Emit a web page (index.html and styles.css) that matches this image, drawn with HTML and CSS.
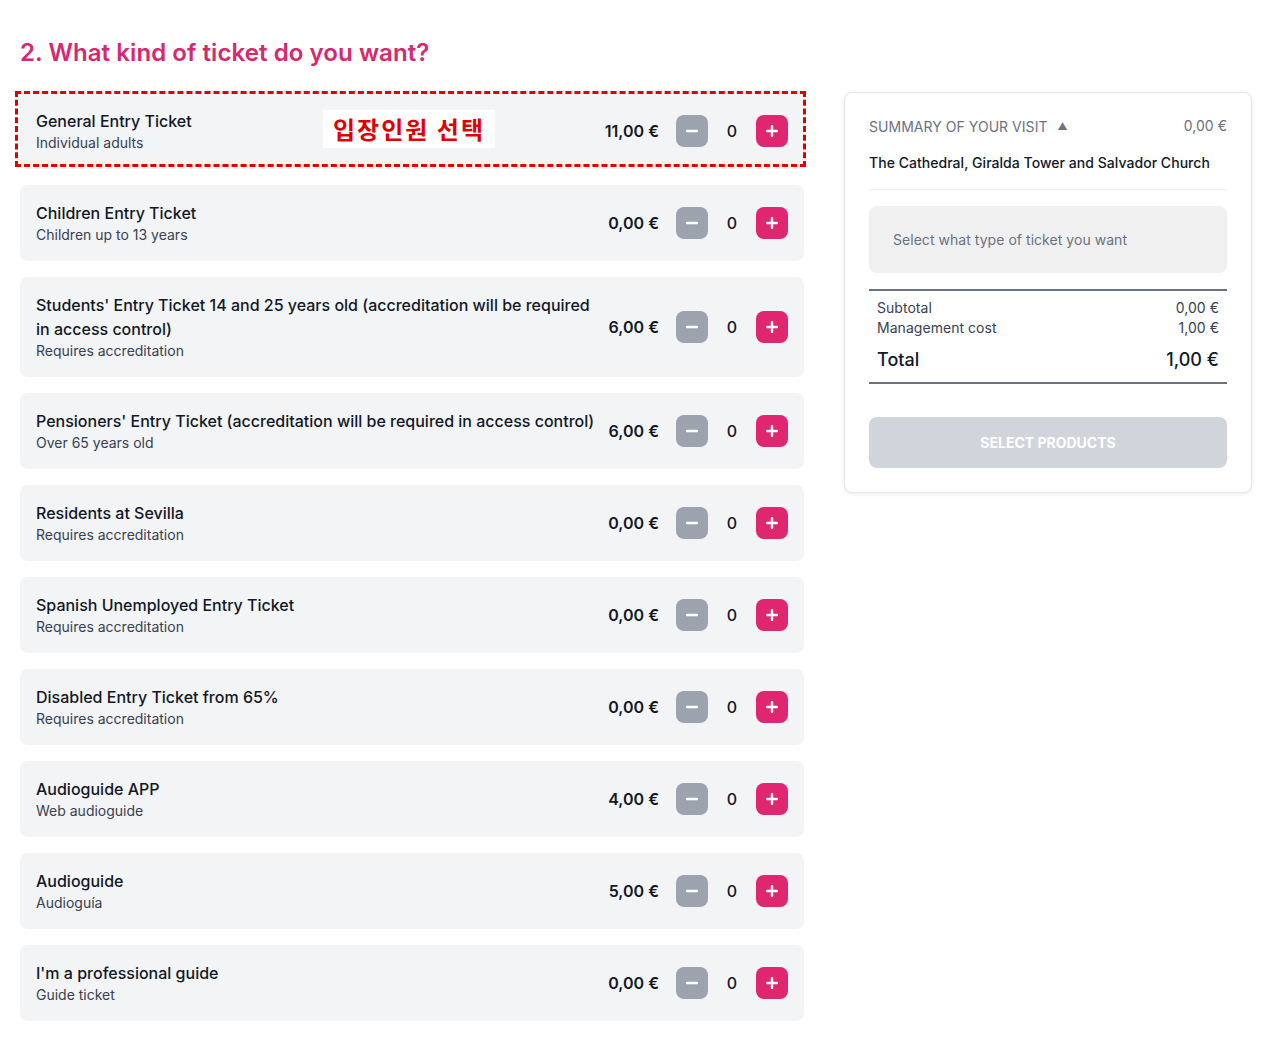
FILE: index.html
```html
<!DOCTYPE html>
<html lang="en">
<head>
<meta charset="utf-8">
<title>Tickets</title>
<link rel="stylesheet" href="styles.css">
</head>
<body>
<div class="page">
  <main class="left">
    <h2 class="heading">2. What kind of ticket do you want?</h2>
    <div class="list">
      <div class="row annotated">
        <div class="info"><div class="name">General Entry Ticket</div><div class="sub">Individual adults</div></div>
        <div class="ctrl"><span class="price">11,00 €</span><button class="btn minus"><svg viewBox="0 0 12 12"><path d="M1 6h10"/></svg></button><span class="count">0</span><button class="btn plus"><svg viewBox="0 0 12 12"><path d="M1 6h10M6 1v10"/></svg></button></div>
        <div class="dash"></div>
        <div class="note">입장인원 선택</div>
      </div>
      <div class="row">
        <div class="info"><div class="name">Children Entry Ticket</div><div class="sub">Children up to 13 years</div></div>
        <div class="ctrl"><span class="price">0,00 €</span><button class="btn minus"><svg viewBox="0 0 12 12"><path d="M1 6h10"/></svg></button><span class="count">0</span><button class="btn plus"><svg viewBox="0 0 12 12"><path d="M1 6h10M6 1v10"/></svg></button></div>
      </div>
      <div class="row">
        <div class="info"><div class="name">Students' Entry Ticket 14 and 25 years old (accreditation will be required in access control)</div><div class="sub">Requires accreditation</div></div>
        <div class="ctrl"><span class="price">6,00 €</span><button class="btn minus"><svg viewBox="0 0 12 12"><path d="M1 6h10"/></svg></button><span class="count">0</span><button class="btn plus"><svg viewBox="0 0 12 12"><path d="M1 6h10M6 1v10"/></svg></button></div>
      </div>
      <div class="row">
        <div class="info"><div class="name">Pensioners' Entry Ticket (accreditation will be required in access control)</div><div class="sub">Over 65 years old</div></div>
        <div class="ctrl"><span class="price">6,00 €</span><button class="btn minus"><svg viewBox="0 0 12 12"><path d="M1 6h10"/></svg></button><span class="count">0</span><button class="btn plus"><svg viewBox="0 0 12 12"><path d="M1 6h10M6 1v10"/></svg></button></div>
      </div>
      <div class="row">
        <div class="info"><div class="name">Residents at Sevilla</div><div class="sub">Requires accreditation</div></div>
        <div class="ctrl"><span class="price">0,00 €</span><button class="btn minus"><svg viewBox="0 0 12 12"><path d="M1 6h10"/></svg></button><span class="count">0</span><button class="btn plus"><svg viewBox="0 0 12 12"><path d="M1 6h10M6 1v10"/></svg></button></div>
      </div>
      <div class="row">
        <div class="info"><div class="name">Spanish Unemployed Entry Ticket</div><div class="sub">Requires accreditation</div></div>
        <div class="ctrl"><span class="price">0,00 €</span><button class="btn minus"><svg viewBox="0 0 12 12"><path d="M1 6h10"/></svg></button><span class="count">0</span><button class="btn plus"><svg viewBox="0 0 12 12"><path d="M1 6h10M6 1v10"/></svg></button></div>
      </div>
      <div class="row">
        <div class="info"><div class="name">Disabled Entry Ticket from 65%</div><div class="sub">Requires accreditation</div></div>
        <div class="ctrl"><span class="price">0,00 €</span><button class="btn minus"><svg viewBox="0 0 12 12"><path d="M1 6h10"/></svg></button><span class="count">0</span><button class="btn plus"><svg viewBox="0 0 12 12"><path d="M1 6h10M6 1v10"/></svg></button></div>
      </div>
      <div class="row">
        <div class="info"><div class="name">Audioguide APP</div><div class="sub">Web audioguide</div></div>
        <div class="ctrl"><span class="price">4,00 €</span><button class="btn minus"><svg viewBox="0 0 12 12"><path d="M1 6h10"/></svg></button><span class="count">0</span><button class="btn plus"><svg viewBox="0 0 12 12"><path d="M1 6h10M6 1v10"/></svg></button></div>
      </div>
      <div class="row">
        <div class="info"><div class="name">Audioguide</div><div class="sub">Audioguía</div></div>
        <div class="ctrl"><span class="price">5,00 €</span><button class="btn minus"><svg viewBox="0 0 12 12"><path d="M1 6h10"/></svg></button><span class="count">0</span><button class="btn plus"><svg viewBox="0 0 12 12"><path d="M1 6h10M6 1v10"/></svg></button></div>
      </div>
      <div class="row">
        <div class="info"><div class="name">I'm a professional guide</div><div class="sub">Guide ticket</div></div>
        <div class="ctrl"><span class="price">0,00 €</span><button class="btn minus"><svg viewBox="0 0 12 12"><path d="M1 6h10"/></svg></button><span class="count">0</span><button class="btn plus"><svg viewBox="0 0 12 12"><path d="M1 6h10M6 1v10"/></svg></button></div>
      </div>
    </div>
  </main>
  <aside class="summary">
    <div class="card">
      <div class="sum-head"><span>SUMMARY OF YOUR VISIT <span class="tri">▲</span></span><span>0,00 €</span></div>
      <div class="visit">The Cathedral, Giralda Tower and Salvador Church</div>
      <div class="empty">Select what type of ticket you want</div>
      <div class="totals">
        <div class="line"><span>Subtotal</span><span>0,00 €</span></div>
        <div class="line"><span>Management cost</span><span>1,00 €</span></div>
        <div class="line total"><span>Total</span><span>1,00 €</span></div>
      </div>
      <button class="select">SELECT PRODUCTS</button>
    </div>
  </aside>
</div>
</body>
</html>
```

FILE: styles.css
```css
* { box-sizing: border-box; }
html, body { margin: 0; padding: 0; background: #fff; }
body { font-family: Inter, "Noto Sans", sans-serif; color: #111827; }
.page { display: flex; align-items: flex-start; gap: 40px; padding: 0 0 0 20px; }
.left { width: 784px; }
.heading { margin: 0; padding-top: 37px; height: 93px; font-size: 24px; line-height: 32px; font-weight: 600; color: #d6286f; letter-spacing: 0.08px; }
.list { display: flex; flex-direction: column; gap: 16px; }
.row { position: relative; display: flex; align-items: center; justify-content: space-between; gap: 8px; background: #f3f4f6; border-radius: 8px; padding: 16px; min-height: 76px; }
.info { flex: 1; min-width: 0; }
.name { font-size: 16px; line-height: 24px; font-weight: 500; color: #111827; }
.sub { font-size: 14px; line-height: 20px; color: #374151; }
.ctrl { display: flex; align-items: center; flex-shrink: 0; }
.price { font-size: 16px; font-weight: 600; margin-right: 17px; white-space: nowrap; }
.btn { width: 32px; height: 32px; border: 0; border-radius: 8px; padding: 0; display: flex; align-items: center; justify-content: center; }
.btn svg { width: 12px; height: 12px; fill: none; stroke: #fff; stroke-width: 2.4; stroke-linecap: round; }
.minus { background: #9ca3af; }
.plus { background: #e0266f; }
.count { width: 48px; text-align: center; font-size: 16px; font-weight: 500; }
.dash { position: absolute; left: -5px; right: -2px; top: -2px; bottom: 2px; border: 3px dashed #e00000; pointer-events: none; }
.note { position: absolute; left: 303px; top: 17px; width: 172px; height: 38px; background: #fff; color: #e00000; font-family: "Noto Sans CJK KR", sans-serif; font-weight: 700; font-size: 24px; letter-spacing: 2px; line-height: 38px; text-align: center; }
.summary { width: 408px; padding-top: 92px; }
.card { background: #fff; border: 1px solid #e5e7eb; border-radius: 8px; box-shadow: 0 1px 4px rgba(0,0,0,0.08); padding: 23px 24px 24px; letter-spacing: 0.04px; }
.sum-head { display: flex; justify-content: space-between; font-size: 14px; line-height: 20px; color: #6b7280; margin-bottom: 16px; }
.tri { font-size: 10px; margin-left: 6px; vertical-align: 2px; }
.visit { font-size: 14px; line-height: 20px; font-weight: 500; color: #111827; padding-bottom: 16px; border-bottom: 1px solid #f0f0f0; }
.empty { margin-top: 16px; height: 67px; background: #f0f0f0; border-radius: 8px; padding: 0 24px; display: flex; align-items: center; font-size: 14px; color: #6b7280; }
.totals { margin-top: 16px; border-top: 2px solid #6b7280; border-bottom: 2px solid #6b7280; padding: 7px 8px 8px; }
.line { display: flex; justify-content: space-between; font-size: 14px; line-height: 20px; color: #374151; }
.line.total { margin-top: 8px; font-size: 18px; line-height: 28px; font-weight: 500; color: #111827; }
.select { display: block; width: 100%; margin-top: 33px; height: 51px; border: 0; border-radius: 8px; background: #d1d5db; color: #fff; font-family: Inter, sans-serif; font-size: 14px; font-weight: 700; }
```
